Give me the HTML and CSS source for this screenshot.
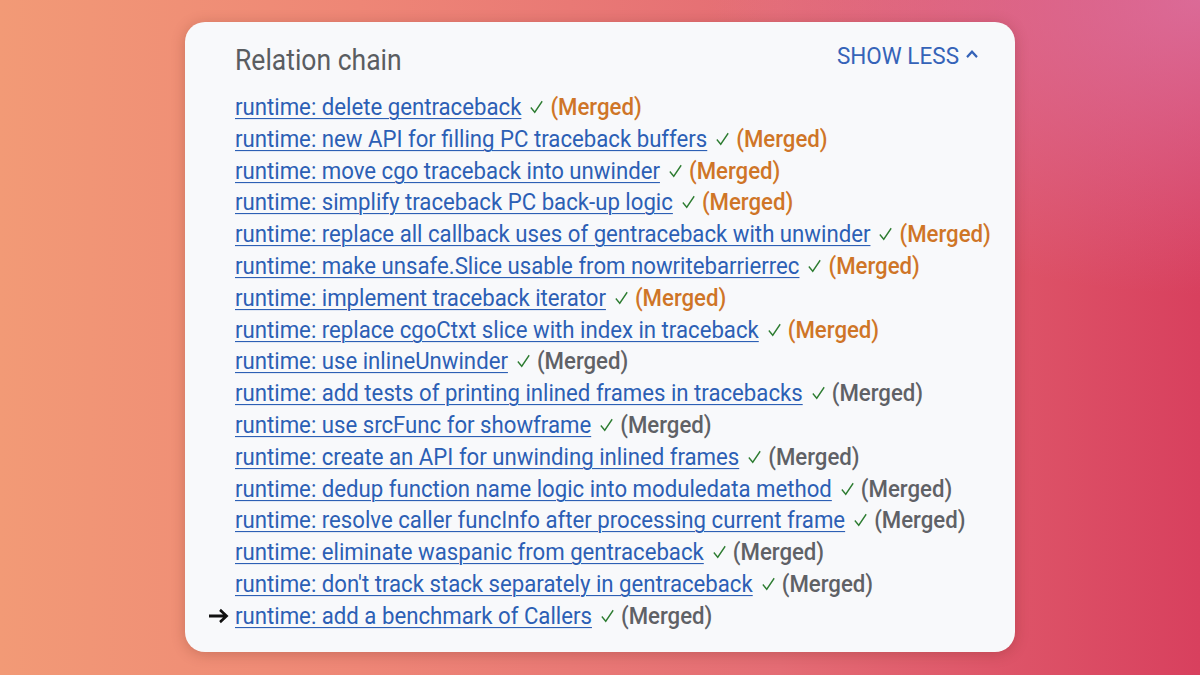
FILE: index.html
```html
<!DOCTYPE html>
<html>
<head>
<meta charset="utf-8">
<link rel="stylesheet" href="styles.css">
</head>
<body>
<div class="stage">
  <div class="card">
    <div class="header">
      <h2 class="title">Relation chain</h2>
      <a class="toggle">SHOW LESS <svg class="caret" width="14" height="10" viewBox="0 0 14 10"><path d="M2 8 L7 3 L12 8" fill="none" stroke="currentColor" stroke-width="2.2"/></svg></a>
    </div>
    <ul class="chain">
      <li><a class="link">runtime: delete gentraceback</a><svg class="check" viewBox="0 0 16 16"><path d="M1.5 8.5 L6 13.5 L14.5 2" fill="none" stroke="currentColor" stroke-width="1.6"/></svg><span class="status orange">(Merged)</span></li>
      <li><a class="link">runtime: new API for filling PC traceback buffers</a><svg class="check" viewBox="0 0 16 16"><path d="M1.5 8.5 L6 13.5 L14.5 2" fill="none" stroke="currentColor" stroke-width="1.6"/></svg><span class="status orange">(Merged)</span></li>
      <li><a class="link">runtime: move cgo traceback into unwinder</a><svg class="check" viewBox="0 0 16 16"><path d="M1.5 8.5 L6 13.5 L14.5 2" fill="none" stroke="currentColor" stroke-width="1.6"/></svg><span class="status orange">(Merged)</span></li>
      <li><a class="link">runtime: simplify traceback PC back-up logic</a><svg class="check" viewBox="0 0 16 16"><path d="M1.5 8.5 L6 13.5 L14.5 2" fill="none" stroke="currentColor" stroke-width="1.6"/></svg><span class="status orange">(Merged)</span></li>
      <li><a class="link">runtime: replace all callback uses of gentraceback with unwinder</a><svg class="check" viewBox="0 0 16 16"><path d="M1.5 8.5 L6 13.5 L14.5 2" fill="none" stroke="currentColor" stroke-width="1.6"/></svg><span class="status orange">(Merged)</span></li>
      <li><a class="link">runtime: make unsafe.Slice usable from nowritebarrierrec</a><svg class="check" viewBox="0 0 16 16"><path d="M1.5 8.5 L6 13.5 L14.5 2" fill="none" stroke="currentColor" stroke-width="1.6"/></svg><span class="status orange">(Merged)</span></li>
      <li><a class="link">runtime: implement traceback iterator</a><svg class="check" viewBox="0 0 16 16"><path d="M1.5 8.5 L6 13.5 L14.5 2" fill="none" stroke="currentColor" stroke-width="1.6"/></svg><span class="status orange">(Merged)</span></li>
      <li><a class="link">runtime: replace cgoCtxt slice with index in traceback</a><svg class="check" viewBox="0 0 16 16"><path d="M1.5 8.5 L6 13.5 L14.5 2" fill="none" stroke="currentColor" stroke-width="1.6"/></svg><span class="status orange">(Merged)</span></li>
      <li><a class="link">runtime: use inlineUnwinder</a><svg class="check" viewBox="0 0 16 16"><path d="M1.5 8.5 L6 13.5 L14.5 2" fill="none" stroke="currentColor" stroke-width="1.6"/></svg><span class="status gray">(Merged)</span></li>
      <li><a class="link">runtime: add tests of printing inlined frames in tracebacks</a><svg class="check" viewBox="0 0 16 16"><path d="M1.5 8.5 L6 13.5 L14.5 2" fill="none" stroke="currentColor" stroke-width="1.6"/></svg><span class="status gray">(Merged)</span></li>
      <li><a class="link">runtime: use srcFunc for showframe</a><svg class="check" viewBox="0 0 16 16"><path d="M1.5 8.5 L6 13.5 L14.5 2" fill="none" stroke="currentColor" stroke-width="1.6"/></svg><span class="status gray">(Merged)</span></li>
      <li><a class="link">runtime: create an API for unwinding inlined frames</a><svg class="check" viewBox="0 0 16 16"><path d="M1.5 8.5 L6 13.5 L14.5 2" fill="none" stroke="currentColor" stroke-width="1.6"/></svg><span class="status gray">(Merged)</span></li>
      <li><a class="link">runtime: dedup function name logic into moduledata method</a><svg class="check" viewBox="0 0 16 16"><path d="M1.5 8.5 L6 13.5 L14.5 2" fill="none" stroke="currentColor" stroke-width="1.6"/></svg><span class="status gray">(Merged)</span></li>
      <li><a class="link">runtime: resolve caller funcInfo after processing current frame</a><svg class="check" viewBox="0 0 16 16"><path d="M1.5 8.5 L6 13.5 L14.5 2" fill="none" stroke="currentColor" stroke-width="1.6"/></svg><span class="status gray">(Merged)</span></li>
      <li><a class="link">runtime: eliminate waspanic from gentraceback</a><svg class="check" viewBox="0 0 16 16"><path d="M1.5 8.5 L6 13.5 L14.5 2" fill="none" stroke="currentColor" stroke-width="1.6"/></svg><span class="status gray">(Merged)</span></li>
      <li><a class="link">runtime: don't track stack separately in gentraceback</a><svg class="check" viewBox="0 0 16 16"><path d="M1.5 8.5 L6 13.5 L14.5 2" fill="none" stroke="currentColor" stroke-width="1.6"/></svg><span class="status gray">(Merged)</span></li>
      <li class="current"><svg class="arrow" width="21" height="14" viewBox="0 0 21 14"><path d="M1 7 H18 M12 1.5 L18.5 7 L12 12.5" fill="none" stroke="currentColor" stroke-width="2.6"/></svg><a class="link">runtime: add a benchmark of Callers</a><svg class="check" viewBox="0 0 16 16"><path d="M1.5 8.5 L6 13.5 L14.5 2" fill="none" stroke="currentColor" stroke-width="1.6"/></svg><span class="status gray">(Merged)</span></li>
    </ul>
  </div>
</div>
</body>
</html>
```
FILE: styles.css
```css
* { box-sizing: border-box; }
html, body { margin: 0; padding: 0; }
body {
  width: 1200px;
  height: 675px;
  overflow: hidden;
  font-family: Roboto, "Liberation Sans", sans-serif;
  background:
    radial-gradient(ellipse 700px 420px at 1200px 0px, rgba(220,120,170,0.75), rgba(220,120,170,0) 70%),
    linear-gradient(90deg, #f29a76 0%, #ee8676 30%, #e46c74 65%, #d8405e 100%);
}
.stage {
  height: 675px;
  padding: 22px 185px 23px 185px;
}
.card {
  height: 630px;
  background: #f8f9fb;
  border-radius: 20px;
  box-shadow: 0 2px 14px rgba(90,30,20,0.25);
  padding: 24px 36px 0 50px;
}
.header {
  display: flex;
  justify-content: space-between;
  align-items: flex-start;
}
.title {
  margin: 0;
  font-weight: 400;
  font-size: 26.5px;
  line-height: 28px;
  color: #5a5d61;
  transform: scaleY(1.1);
}
.toggle {
  display: flex;
  align-items: center;
  gap: 6px;
  color: #3563b8;
  font-size: 22.5px;
  line-height: 22px;
  margin-top: -2px;
  transform: scaleY(1.1);
}
.caret { margin-top: -2px; }
.chain {
  list-style: none;
  margin: 17px 0 0 0;
  padding: 0;
}
.chain li {
  position: relative;
  display: flex;
  align-items: center;
  font-size: 22.2px;
  line-height: 31.8px;
  height: 31.8px;
  white-space: nowrap;
  transform: scaleY(1.1);
}
.link {
  color: #2c5fb5;
  text-decoration: underline;
  text-underline-offset: 3px;
  text-decoration-thickness: 1px;
}
.check {
  width: 15px;
  height: 14px;
  color: #2e7d32;
  margin: 0 6px 0 8px;
  flex: none;
}
.status { font-weight: 500; }
.orange { color: #cf7527; }
.gray { color: #5f6166; }
.arrow {
  position: absolute;
  left: -27px;
  top: 9px;
  color: #111;
}
```
